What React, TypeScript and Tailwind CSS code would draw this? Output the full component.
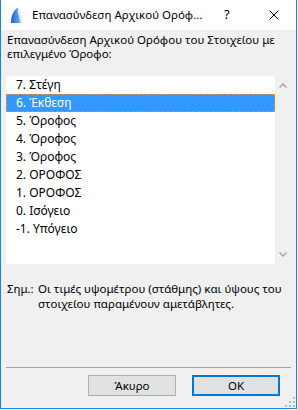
import React from "react";

const items = [
  "7. Στέγη",
  "6. Έκθεση",
  "5. Όροφος",
  "4. Όροφος",
  "3. Όροφος",
  "2. ΟΡΟΦΟΣ",
  "1. ΟΡΟΦΟΣ",
  "0. Ισόγειο",
  "-1. Υπόγειο",
];

export default function App() {
  return (
    <div
      className="w-[298px] h-[410px] bg-white text-[11.5px] text-black"
      style={{ fontFamily: '"Noto Sans", "DejaVu Sans", sans-serif' }}
    >
      <div className="w-[297px] h-[409px] border-l border-r border-b border-[#1883d7] flex flex-col">
        {/* title bar */}
        <div className="h-[30px] bg-white flex items-center relative shrink-0">
          <svg className="ml-[9px]" width="14" height="16" viewBox="0 0 14 16">
            <defs>
              <linearGradient id="g" x1="0" y1="0" x2="1" y2="0">
                <stop offset="0" stopColor="#1a5fd0" />
                <stop offset="0.6" stopColor="#5aa0f0" />
                <stop offset="1" stopColor="#cfe4fb" />
              </linearGradient>
            </defs>
            <path d="M1 16 C1 8 4 2 8 1 L13 16 Z" fill="url(#g)" />
            <path d="M8 1 L13 16 L11 16 L7.5 4 Z" fill="#e8f2fd" />
          </svg>
          <span className="ml-[8px] text-[11.5px] leading-none">Επανασύνδεση Αρχικού Ορόφ...</span>
          <span className="absolute left-[223px] top-[8px] text-[13px] leading-none">?</span>
          <svg className="absolute left-[268px] top-[10px]" width="10" height="10" viewBox="0 0 10 10">
            <path d="M0.5 0.5 L9.5 9.5 M9.5 0.5 L0.5 9.5" stroke="#000" strokeWidth="1" />
          </svg>
        </div>
        {/* body */}
        <div className="flex-1 bg-[#f0f0f0] flex flex-col relative">
          <p className="pl-[6px] pt-[3px] leading-[14px] pr-[8px]">
            Επανασύνδεση Αρχικού Ορόφου του Στοιχείου με επιλεγμένο Όροφο:
          </p>
          <div className="mt-[15px] ml-[5px] flex h-[188px] text-[12px]">
            <div className="w-[269px] bg-white">
              {items.map((it, i) => (
                <div
                  key={it}
                  className={
                    i === 1
                      ? "h-[18px] bg-[#3399ff] text-white pl-[9px] flex items-center border border-dashed border-[#e8892a]"
                      : "h-[18px] pl-[10px] flex items-center"
                  }
                >
                  <span>{it}</span>
                </div>
              ))}
            </div>
            <div className="w-[15px] flex flex-col items-center justify-between py-[7px]">
              <svg width="8" height="5" viewBox="0 0 8 5">
                <path d="M0.5 4.5 L4 1 L7.5 4.5" stroke="#a6a6a6" strokeWidth="1.5" fill="none" />
              </svg>
              <svg width="8" height="5" viewBox="0 0 8 5">
                <path d="M0.5 0.5 L4 4 L7.5 0.5" stroke="#a6a6a6" strokeWidth="1.5" fill="none" />
              </svg>
            </div>
          </div>
          <div className="mt-[17px] ml-[6px] flex leading-[15px]">
            <span className="w-[31px] shrink-0">Σημ.:</span>
            <span className="pr-[12px]">
              Οι τιμές υψομέτρου (στάθμης) και ύψους του στοιχείου παραμένουν αμετάβλητες.
            </span>
          </div>
          <div className="absolute left-[5px] right-[5px] top-[337px] h-px bg-[#a0a0a0]" />
          <div className="absolute top-[345px] left-[87px] flex gap-[16px]">
            <button className="w-[88px] h-[21px] bg-[#e1e1e1] border border-[#adadad] flex items-center justify-center text-[11.5px]">
              Άκυρο
            </button>
            <button className="w-[88px] h-[21px] bg-[#e1e1e1] border-2 border-[#0078d7] flex items-center justify-center text-[11.5px]">
              OK
            </button>
          </div>
          <svg className="absolute right-[1px] bottom-[1px]" width="10" height="10" viewBox="0 0 10 10">
            <g fill="#b8b8b8">
              <rect x="8" y="0" width="2" height="2" />
              <rect x="4" y="4" width="2" height="2" />
              <rect x="8" y="4" width="2" height="2" />
              <rect x="0" y="8" width="2" height="2" />
              <rect x="4" y="8" width="2" height="2" />
              <rect x="8" y="8" width="2" height="2" />
            </g>
          </svg>
        </div>
      </div>
    </div>
  );
}
